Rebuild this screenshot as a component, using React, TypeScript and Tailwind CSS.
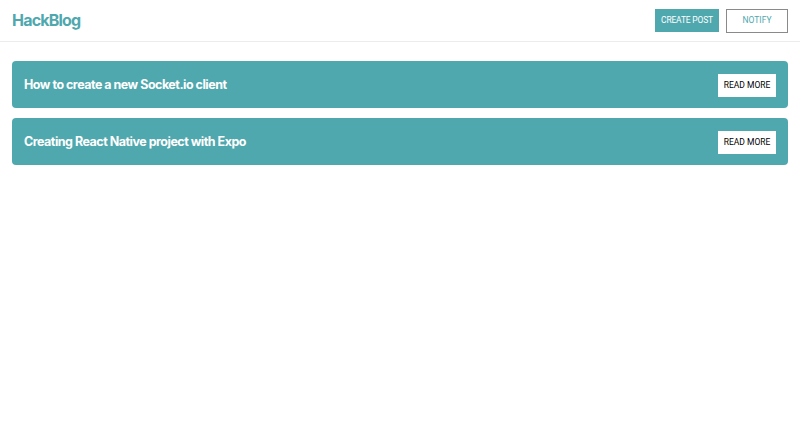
const posts = [
  { id: 1, title: 'How to create a new Socket.io client' },
  { id: 2, title: 'Creating React Native project with Expo' },
];

export default function App() {
  return (
    <div className="min-h-screen bg-white font-['Inter',sans-serif]">
      {/* top nav */}
      <nav className="h-[42px] flex items-center justify-between px-3 border-b border-[#ececec]">
        <h1 className="text-[16px] font-bold text-[#4fa8ae] tracking-[-0.8px] pb-[1px]">HackBlog</h1>
        <div className="flex items-center gap-[7px] font-['Roboto',sans-serif]">
          <button className="h-[23px] w-[64px] bg-[#4fa8ae] text-white text-[8.5px] tracking-[-0.2px]">
            CREATE POST
          </button>
          <button className="h-[24px] w-[62px] border border-[#8a8a8a] bg-white text-[#4fa8ae] text-[8.5px]">
            NOTIFY
          </button>
        </div>
      </nav>

      {/* posts */}
      <main className="px-3 pt-[19px] flex flex-col gap-[10px]">
        {posts.map((post) => (
          <div
            key={post.id}
            className="h-[47px] rounded-[4px] bg-[#4ea8ae] flex items-center justify-between pl-3 pr-3"
          >
            <h3 className="text-[12.5px] font-bold text-white tracking-[-0.5px] pt-[2px]">{post.title}</h3>
            <button className="h-[23px] w-[58px] bg-white text-black text-[8.5px] font-['Roboto',sans-serif] mt-[1px]">
              READ MORE
            </button>
          </div>
        ))}
      </main>
    </div>
  );
}
